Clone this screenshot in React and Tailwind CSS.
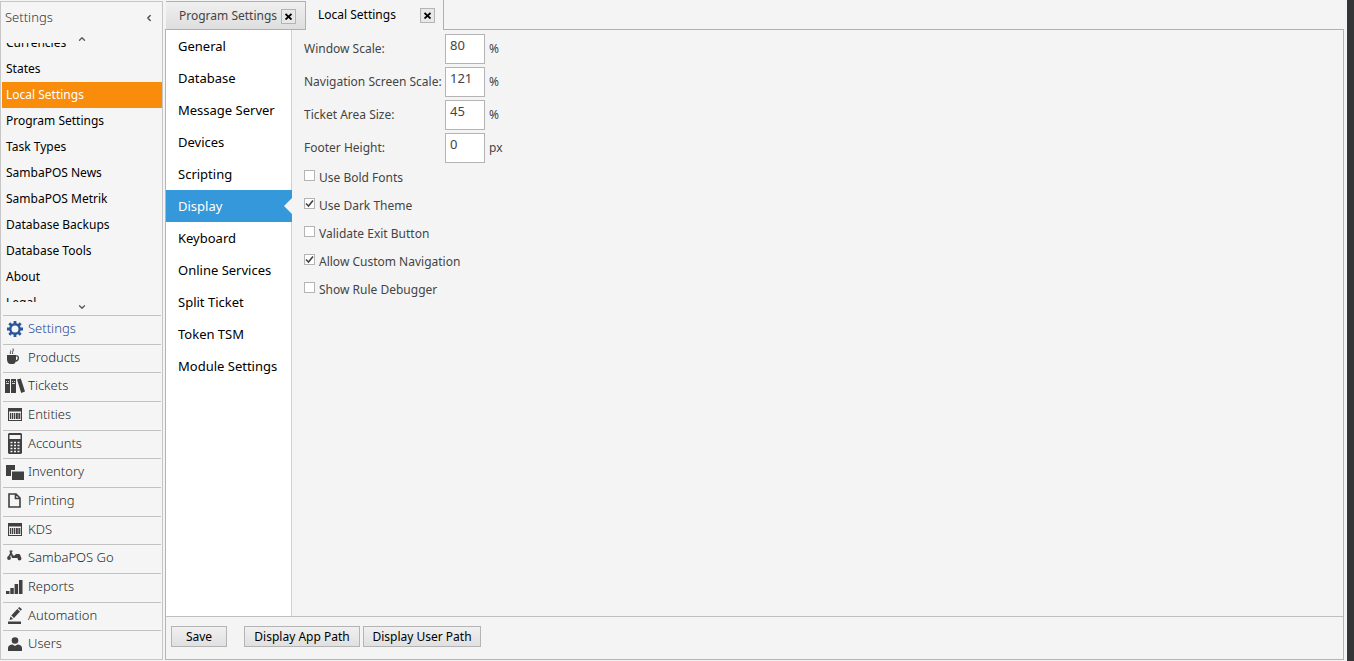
import React, { useState } from 'react';
import { ChevronDown, ChevronLeft, ChevronUp } from 'lucide-react';
import clsx from 'clsx';

function GearIcon() {
  return (
    <svg viewBox="0 0 16 16" className="w-4 h-4 text-[#2b579a]" fill="none" stroke="currentColor">
      <circle cx="8" cy="8" r="4.7" strokeWidth="2.4" />
      <path
        d="M8 0v3M8 13v3M0 8h3M13 8h3M2.300 2.300l2.200 2.200M11.500 11.500l2.200 2.200M2.300 13.700l2.200-2.200M11.500 4.500l2.200-2.200"
        strokeWidth="2.800"
      />
    </svg>
  );
}

function CupIcon() {
  return (
    <svg viewBox="0 0 16 18" className="w-4 h-[18px]">
      <path d="M0 7h9v4.500c0 2.500-1.200 4.500-3 4.500H3.500C1.500 16 0 14 0 11.500z" fill="currentColor" />
      <path d="M9 8c3.500-1 3 5-.5 5" fill="none" stroke="currentColor" strokeWidth="1.300" />
      <path d="M3.500 6c-1-1.500 1-2 0-3.500M5.800 6c-1.200-2 1.200-3 .2-5.500" fill="none" stroke="currentColor" />
    </svg>
  );
}

function BooksIcon() {
  return (
    <svg viewBox="0 0 20 16" className="w-5 h-4">
      <path d="M0 1h5v14H0zM6 1h5v14H6zM12 1.500l3.800-1L20 13.500l-3.800 1.500z" fill="currentColor" />
      <path d="M1 3.500h1M3 3.500h1M1 5.500h3M7 3.500h1M9 3.500h1M7 5.500h3" stroke="#f5f5f5" strokeWidth="0.800" />
    </svg>
  );
}

function BarcodeIcon() {
  return (
    <svg viewBox="0 0 14 13" className="w-[14px] h-[13px]">
      <path d="M0 0h14v13H0zM1 3.500v8.500h12V3.500z" fill="currentColor" fillRule="evenodd" />
      <path d="M2.500 5v6M4.500 5v6M6.500 5v6M8.500 5v6M10 5v6M11.700 5v6" stroke="currentColor" strokeWidth="1.300" />
    </svg>
  );
}

function CalculatorIcon() {
  return (
    <svg viewBox="0 0 14 21" className="w-[14px] h-[21px]">
      <path d="M1 0h12l1 1v19l-1 1H1l-1-1V1zM1.500 2v4h11V2z" fill="currentColor" fillRule="evenodd" />
      <path
        d="M2.500 9.500h9M2.500 12.500h9M2.500 15.500h9M2.500 18.500h9"
        stroke="#f5f5f5"
        strokeWidth="1.500"
        strokeDasharray="2 1.500"
      />
    </svg>
  );
}

function WindowsIcon() {
  return (
    <svg viewBox="0 0 18 15" className="w-[18px] h-[15px]" fill="currentColor">
      <path d="M0 0h9v5H5v6H0z" />
      <path d="M6 6.500h12V15H6z" />
    </svg>
  );
}

function PageIcon() {
  return (
    <svg viewBox="0 0 13 15" className="w-[13px] h-[15px]" fill="none" stroke="currentColor" strokeWidth="1.600">
      <path d="M1 1h7l4 4v9H1zM7.500 1v4.500H12" />
    </svg>
  );
}

function ScooterIcon() {
  return (
    <svg viewBox="0 0 15 12" className="w-[15px] h-3 mb-1" fill="currentColor">
      <path d="M2.500 0.500h3v1.200h-1L6 5.500h1.500L9 4h3.500l1.500 2.500-2.500 1.200L10 8H5L4 5 3 6.500H1L3 3.500z" />
      <circle cx="2" cy="8" r="1.900" />
      <circle cx="12.500" cy="8.500" r="1.900" />
    </svg>
  );
}

function BarsIcon() {
  return (
    <svg viewBox="0 0 17 14" className="w-[17px] h-[14px]" fill="currentColor">
      <path d="M0 11h3.500v3H0zM4.300 8h3.500v6H4.300zM8.600 4h3.500v10H8.600zM13 0h3.500v14H13z" />
    </svg>
  );
}

function PenIcon() {
  return (
    <svg viewBox="0 0 14 17" className="w-[14px] h-[17px]" fill="currentColor">
      <path d="M0 14.500h13V17H0zM1.500 13l1-3.500 2.700 2.500zM3.300 8.500l6-6.500 2.700 2.500-6 6.500zM10 1.200L11.200 0 14 2.300l-1.200 1.400z" />
    </svg>
  );
}

function UserIcon() {
  return (
    <svg viewBox="0 0 14 15" className="w-[14px] h-[15px]" fill="currentColor">
      <circle cx="7" cy="3.500" r="3.300" />
      <path d="M0 14v-3c0-2 2-3.500 4.500-3.500L7 9l2.500-1.500C12 7.500 14 9 14 11v3z" />
    </svg>
  );
}

const settingsItems = [
  'Currencies',
  'States',
  'Local Settings',
  'Program Settings',
  'Task Types',
  'SambaPOS News',
  'SambaPOS Metrik',
  'Database Backups',
  'Database Tools',
  'About',
  'Legal',
];

const modules = [
  { name: 'Settings', icon: GearIcon },
  { name: 'Products', icon: CupIcon },
  { name: 'Tickets', icon: BooksIcon },
  { name: 'Entities', icon: BarcodeIcon },
  { name: 'Accounts', icon: CalculatorIcon },
  { name: 'Inventory', icon: WindowsIcon },
  { name: 'Printing', icon: PageIcon },
  { name: 'KDS', icon: BarcodeIcon },
  { name: 'SambaPOS Go', icon: ScooterIcon },
  { name: 'Reports', icon: BarsIcon },
  { name: 'Automation', icon: PenIcon },
  { name: 'Users', icon: UserIcon },
];

const sections = [
  'General',
  'Database',
  'Message Server',
  'Devices',
  'Scripting',
  'Display',
  'Keyboard',
  'Online Services',
  'Split Ticket',
  'Token TSM',
  'Module Settings',
];

const numberFields = [
  { id: 'windowScale', label: 'Window Scale:', value: '80', unit: '%' },
  { id: 'navScale', label: 'Navigation Screen Scale:', value: '121', unit: '%' },
  { id: 'ticketArea', label: 'Ticket Area Size:', value: '45', unit: '%' },
  { id: 'footerHeight', label: 'Footer Height:', value: '0', unit: 'px' },
];

const options = [
  { id: 'boldFonts', label: 'Use Bold Fonts', checked: false },
  { id: 'darkTheme', label: 'Use Dark Theme', checked: true },
  { id: 'validateExit', label: 'Validate Exit Button', checked: false },
  { id: 'customNav', label: 'Allow Custom Navigation', checked: true },
  { id: 'ruleDebugger', label: 'Show Rule Debugger', checked: false },
];

function Sidebar() {
  const [selected, setSelected] = useState('Local Settings');

  return (
    <aside className="flex flex-col w-[163px] shrink-0 mt-px mb-px border border-[#c6c6c6] bg-[#f5f5f5]">
      <div className="flex items-center justify-between h-8 pl-1 pr-2 shrink-0">
        <h1 className="text-[13px] font-light text-[#333]">Settings</h1>
        <button aria-label="Collapse">
          <ChevronLeft className="w-[10px] h-[10px] text-[#444]" strokeWidth={3} />
        </button>
      </div>
      <button aria-label="Scroll up" className="flex justify-center h-[9px] shrink-0">
        <ChevronUp className="w-[10px] h-[10px] text-[#555]" strokeWidth={3} />
      </button>
      <ul className="flex flex-col justify-center flex-1 min-h-0 overflow-hidden pl-px">
        {settingsItems.map((item) => (
          <li key={item} className="shrink-0">
            <button
              onClick={() => setSelected(item)}
              className={clsx(
                'block w-full h-[26px] pl-1 text-left text-[12px] leading-[26px]',
                item === selected ? 'bg-[#f98c0a] text-white' : 'text-black'
              )}
            >
              {item}
            </button>
          </li>
        ))}
      </ul>
      <button aria-label="Scroll down" className="flex justify-center h-[13px] shrink-0">
        <ChevronDown className="w-[10px] h-[10px] text-[#555]" strokeWidth={3} />
      </button>
      <nav className="grid auto-rows-fr h-[344px] shrink-0 pl-0.5 pr-px">
        {modules.map(({ name, icon: Icon }) => (
          <button
            key={name}
            className={clsx(
              'flex items-center pb-0.5 border-t border-[#c2c2c2] text-left text-[13px] font-light',
              name === 'Settings' ? 'text-[#1f4a94]' : 'text-[#2a2a2a]'
            )}
          >
            <span className="flex items-center justify-center w-[25px] pr-0.5 shrink-0 text-[#404040]">
              <Icon />
            </span>
            {name}
          </button>
        ))}
      </nav>
    </aside>
  );
}

function CloseButton({ label }) {
  return (
    <button
      aria-label={label}
      className="flex items-center justify-center w-[15px] h-[15px] border border-[#b4b4b4] bg-[#e8e8e8]"
    >
      <svg viewBox="0 0 7 7" className="w-[7px] h-[7px]" stroke="#000" strokeWidth="1.800">
        <path d="M0.500 1L6.500 6.500M6.500 1L0.500 6.500" />
      </svg>
    </button>
  );
}

function Tabs() {
  return (
    <div className="flex h-[30px] shrink-0 text-[12px]">
      <div className="flex-none w-px border-b border-[#b0b0b0]" />
      <div className="flex items-center justify-between w-[140px] mt-px pl-[13px] pr-[9px] pt-px border-t border-b border-r border-[#b0b0b0] bg-linear-to-b from-[#f0f0f0] to-[#dedede] text-[#444]">
        <button className="whitespace-nowrap">Program Settings</button>
        <CloseButton label="Close Program Settings" />
      </div>
      <div className="flex items-center justify-between w-[138px] pl-3 pr-2 border-r border-[#b0b0b0] text-black">
        <button className="whitespace-nowrap">Local Settings</button>
        <CloseButton label="Close Local Settings" />
      </div>
      <div className="flex-1 border-b border-[#b0b0b0]" />
    </div>
  );
}

function SectionList() {
  const [active, setActive] = useState('Display');

  return (
    <ul className="w-[126px] shrink-0 bg-white border-r border-[#d0d0d0]">
      {sections.map((section) => (
        <li key={section} className="relative -mr-px">
          <button
            onClick={() => setActive(section)}
            className={clsx(
              'block w-full h-8 pl-3 text-left text-[13px] leading-8 whitespace-nowrap',
              section === active ? 'bg-[#3498db] text-white' : 'text-black'
            )}
          >
            {section}
          </button>
          {section === active && (
            <svg viewBox="0 0 8 16" className="absolute right-0 top-2 w-2 h-4" fill="#f4f4f4">
              <path d="M8 0v16L0 8z" />
            </svg>
          )}
        </li>
      ))}
    </ul>
  );
}

function Option({ id, label, checked }) {
  return (
    <div className="flex items-center h-7">
      <span className="relative flex mb-1">
        <input
          id={id}
          type="checkbox"
          defaultChecked={checked}
          className="peer appearance-none w-[11px] h-[11px] border border-[#b4b4b4] bg-white"
        />
        <svg
          viewBox="0 0 11 11"
          className="absolute inset-0 hidden w-[11px] h-[11px] pointer-events-none peer-checked:block"
          fill="none"
          stroke="#444"
          strokeWidth="1.600"
        >
          <path d="M2 5.500L4.500 8L9 2.500" />
        </svg>
      </span>
      <label htmlFor={id} className="pl-1 pt-0.5">
        {label}
      </label>
    </div>
  );
}

function DisplaySettings() {
  return (
    <form className="flex-1 pl-3 pt-1 text-[12px] text-[#444]">
      <div className="grid grid-cols-[141px_40px_auto] gap-y-[3px]">
        {numberFields.map((field) => (
          <React.Fragment key={field.id}>
            <label htmlFor={field.id} className="leading-[30px] whitespace-nowrap">
              {field.label}
            </label>
            <input
              id={field.id}
              defaultValue={field.value}
              className="w-10 h-[30px] pl-1 pb-2 border border-[#b4b4b4] bg-white text-[13px]"
            />
            <span className="pl-1 leading-[30px]">{field.unit}</span>
          </React.Fragment>
        ))}
      </div>
      {options.map((option) => (
        <Option key={option.id} {...option} />
      ))}
    </form>
  );
}

function FooterButton({ children, className }) {
  return (
    <button
      className={clsx(
        'h-[21px] border border-[#b4b4b4] bg-linear-to-b from-[#f0f0f0] to-[#e0e0e0] text-[12px] leading-[19px] text-black whitespace-nowrap',
        className
      )}
    >
      {children}
    </button>
  );
}

export default function App() {
  return (
    <div className="flex h-screen bg-[#f4f4f4] font-['Noto_Sans','Open_Sans',sans-serif]">
      <Sidebar />
      <main className="flex flex-col flex-1 min-w-0 ml-0.5 mr-[3px] mb-px">
        <Tabs />
        <div className="flex flex-col flex-1 min-h-0 border-x border-b border-[#b4b4b4]">
          <div className="flex flex-1 min-h-0">
            <SectionList />
            <DisplaySettings />
          </div>
          <div className="flex items-center h-[43px] shrink-0 pl-[5px] pb-1 border-t border-[#c0c0c0]">
            <FooterButton className="w-14">Save</FooterButton>
            <FooterButton className="w-[116px] ml-[17px]">Display App Path</FooterButton>
            <FooterButton className="w-[118px] ml-[3px]">Display User Path</FooterButton>
          </div>
        </div>
      </main>
      <div className="w-[7px] shrink-0 bg-[#333536]" />
    </div>
  );
}
